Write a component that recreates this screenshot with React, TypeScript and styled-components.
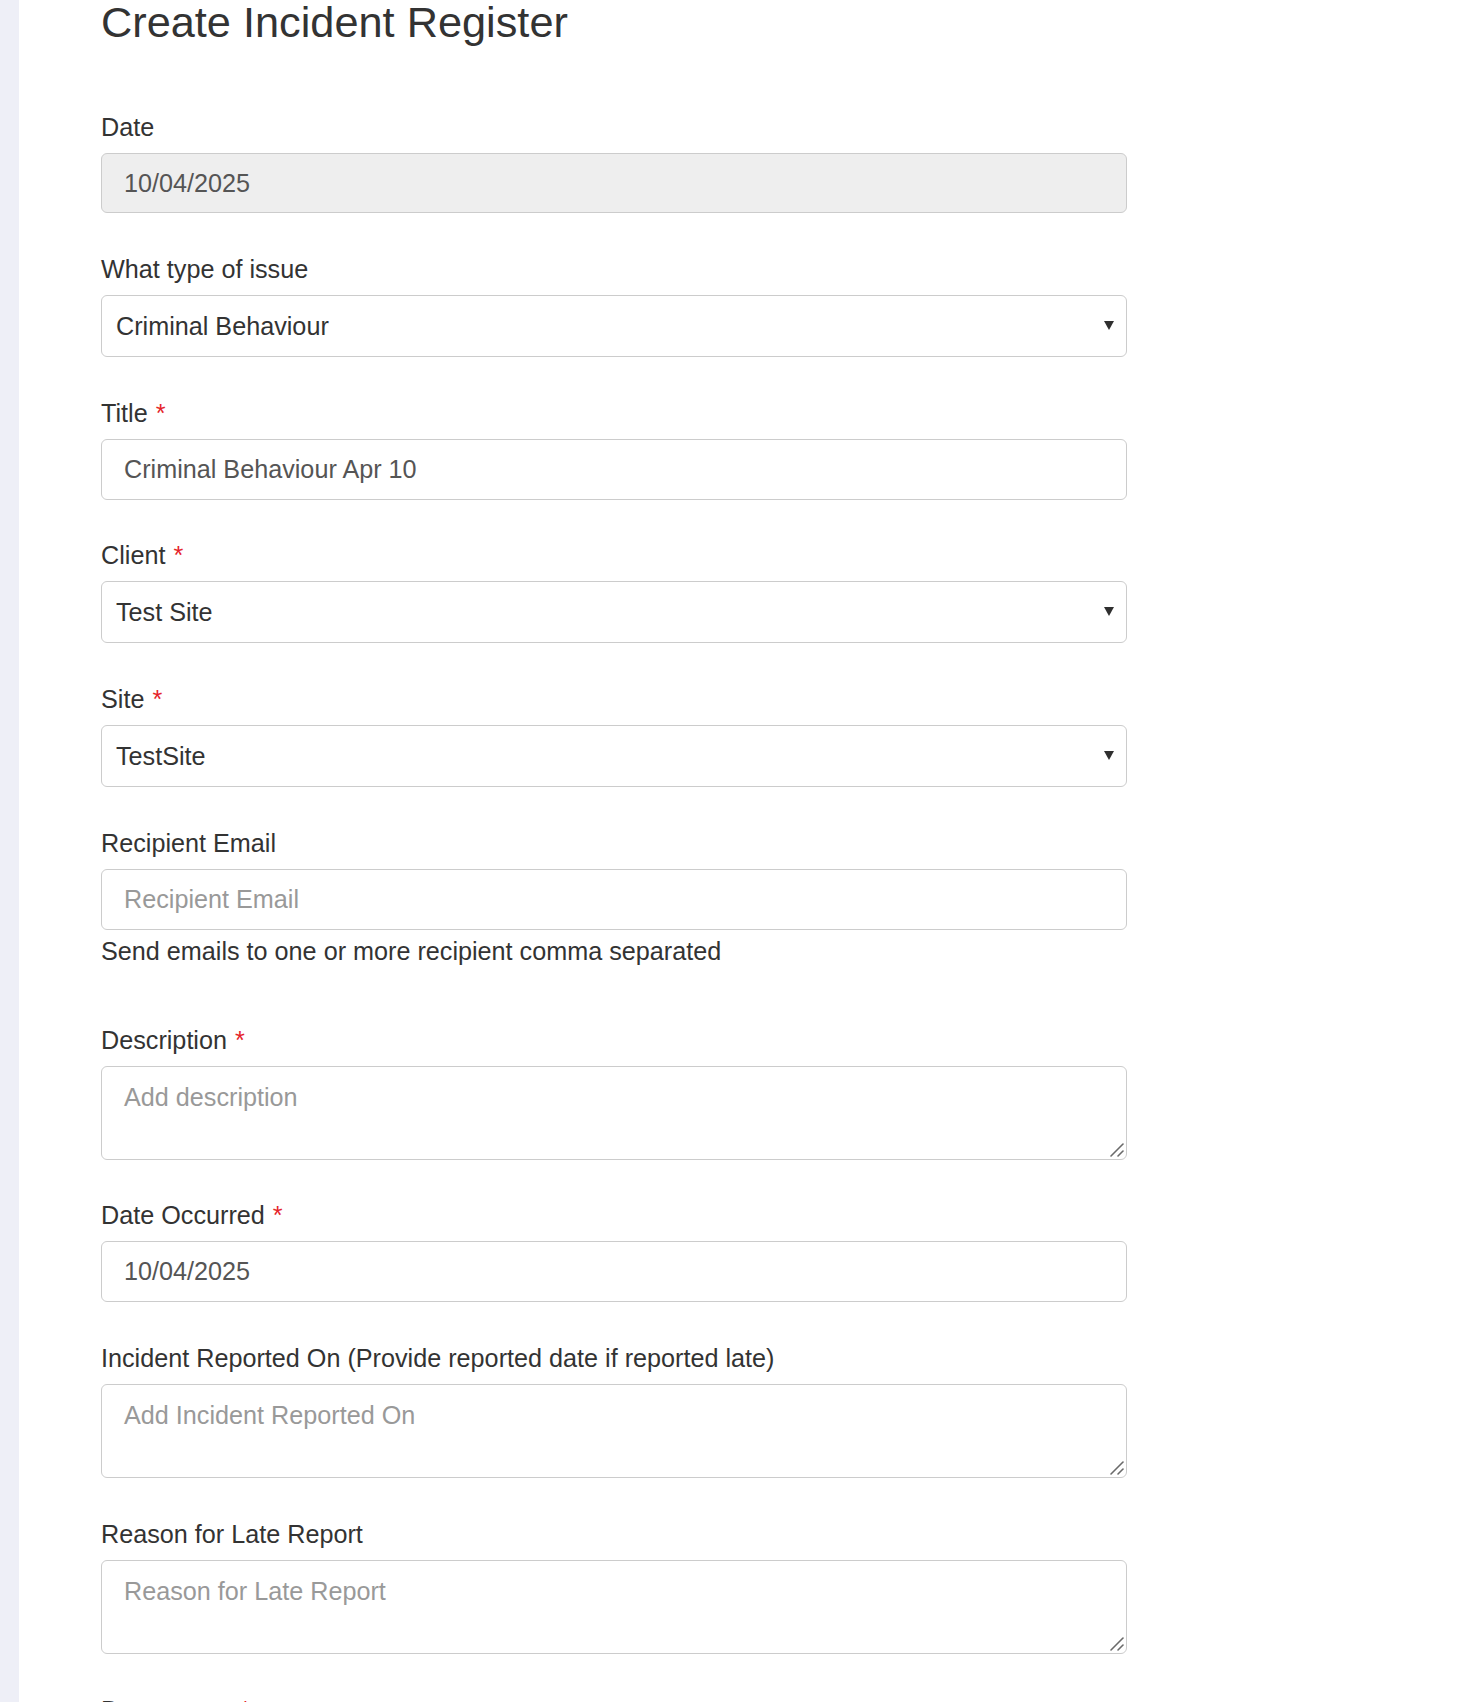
import React from "react";
import styled, { createGlobalStyle } from "styled-components";

const GlobalStyle = createGlobalStyle`
  html, body {
    margin: 0;
    padding: 0;
    background: #ffffff;
  }
  body {
    font-family: "Liberation Sans", Arial, Helvetica, sans-serif;
    color: #333333;
  }
  * { box-sizing: border-box; }
`;

const Page = styled.div`
  display: flex;
  min-height: 1702px;
  background: #ffffff;
`;

const SideStrip = styled.div`
  flex: 0 0 19px;
  background: #eeeff7;
`;

const Main = styled.main`
  flex: 1;
  padding-left: 82px;
`;

const Heading = styled.h1`
  margin: -3px 0 62px;
  font-size: 43.3px;
  line-height: 50px;
  font-weight: 400;
  color: #333333;
`;

const Form = styled.form`
  width: 1026px;
  display: flex;
  flex-direction: column;
`;

const Group = styled.div`
  display: flex;
  flex-direction: column;
  margin-bottom: 37.75px;
`;

const Label = styled.label`
  display: block;
  font-size: 25.2px;
  line-height: 36px;
  margin-bottom: 8px;
  color: #333333;
`;

const Required = styled.span`
  color: #e5242a;
  margin-left: 8px;
`;

const controlBase = `
  width: 100%;
  border: 1px solid #cccccc;
  border-radius: 6px;
  font-family: "Liberation Sans", Arial, Helvetica, sans-serif;
  font-size: 25.2px;
  outline: none;
  margin: 0;
`;

const TextInput = styled.input<{ $disabled?: boolean }>`
  ${controlBase}
  height: ${(p) => (p.$disabled ? "60px" : "61px")};
  padding: 0 22px;
  color: #555555;
  background: ${(p) => (p.$disabled ? "#eeeeee" : "#ffffff")};
  &::placeholder {
    color: #999999;
  }
`;

const SelectWrap = styled.div`
  position: relative;
  &::after {
    content: "";
    position: absolute;
    right: 13px;
    top: 50%;
    margin-top: -5px;
    width: 0;
    height: 0;
    border-left: 5px solid transparent;
    border-right: 5px solid transparent;
    border-top: 9px solid #2f2f2f;
    pointer-events: none;
  }
`;

const Select = styled.select`
  ${controlBase}
  height: 62px;
  padding: 0 40px 0 14px;
  color: #333333;
  background: #ffffff;
  appearance: none;
  -webkit-appearance: none;
`;

const AreaWrap = styled.div`
  position: relative;
`;

const TextArea = styled.textarea`
  ${controlBase}
  height: 94px;
  padding: 12px 22px;
  line-height: 36px;
  color: #555555;
  background: #ffffff;
  resize: none;
  display: block;
  &::placeholder {
    color: #999999;
  }
`;

const Grip = styled.svg`
  position: absolute;
  right: 2px;
  bottom: 2px;
  width: 16px;
  height: 16px;
  pointer-events: none;
`;

const HelpText = styled.div`
  font-size: 25.2px;
  line-height: 36px;
  margin-top: 3px;
  margin-bottom: 15px;
  color: #333333;
`;

type FieldProps = {
  label: string;
  required?: boolean;
  children: React.ReactNode;
};

const Field = ({ label, required, children }: FieldProps) => (
  <Group>
    <Label>
      {label}
      {required && <Required>*</Required>}
    </Label>
    {children}
  </Group>
);

const SelectField = ({ value }: { value: string }) => (
  <SelectWrap>
    <Select value={value} onChange={() => {}}>
      <option value={value}>{value}</option>
    </Select>
  </SelectWrap>
);

const AreaField = ({ placeholder }: { placeholder: string }) => (
  <AreaWrap>
    <TextArea placeholder={placeholder} />
    <Grip viewBox="0 0 16 16">
      <path d="M2 14 L14 2" stroke="#6a6a6a" strokeWidth="1.6" strokeLinecap="round" />
      <path d="M9 14 L14 9" stroke="#6a6a6a" strokeWidth="1.6" strokeLinecap="round" />
    </Grip>
  </AreaWrap>
);

export default function App() {
  return (
    <>
      <GlobalStyle />
      <Page>
        <SideStrip />
        <Main>
          <Heading>Create Incident Register</Heading>
          <Form onSubmit={(e) => e.preventDefault()}>
            <Field label="Date">
              <TextInput $disabled readOnly value="10/04/2025" />
            </Field>
            <Field label="What type of issue">
              <SelectField value="Criminal Behaviour" />
            </Field>
            <Field label="Title" required>
              <TextInput readOnly value="Criminal Behaviour Apr 10" />
            </Field>
            <Field label="Client" required>
              <SelectField value="Test Site" />
            </Field>
            <Field label="Site" required>
              <SelectField value="TestSite" />
            </Field>
            <Group>
              <Label>Recipient Email</Label>
              <TextInput placeholder="Recipient Email" />
              <HelpText>Send emails to one or more recipient comma separated</HelpText>
            </Group>
            <Field label="Description" required>
              <AreaField placeholder="Add description" />
            </Field>
            <Field label="Date Occurred" required>
              <TextInput readOnly value="10/04/2025" />
            </Field>
            <Field label="Incident Reported On (Provide reported date if reported late)">
              <AreaField placeholder="Add Incident Reported On" />
            </Field>
            <Field label="Reason for Late Report">
              <AreaField placeholder="Reason for Late Report" />
            </Field>
            <Field label="Department" required>
              <SelectField value="" />
            </Field>
          </Form>
        </Main>
      </Page>
    </>
  );
}
